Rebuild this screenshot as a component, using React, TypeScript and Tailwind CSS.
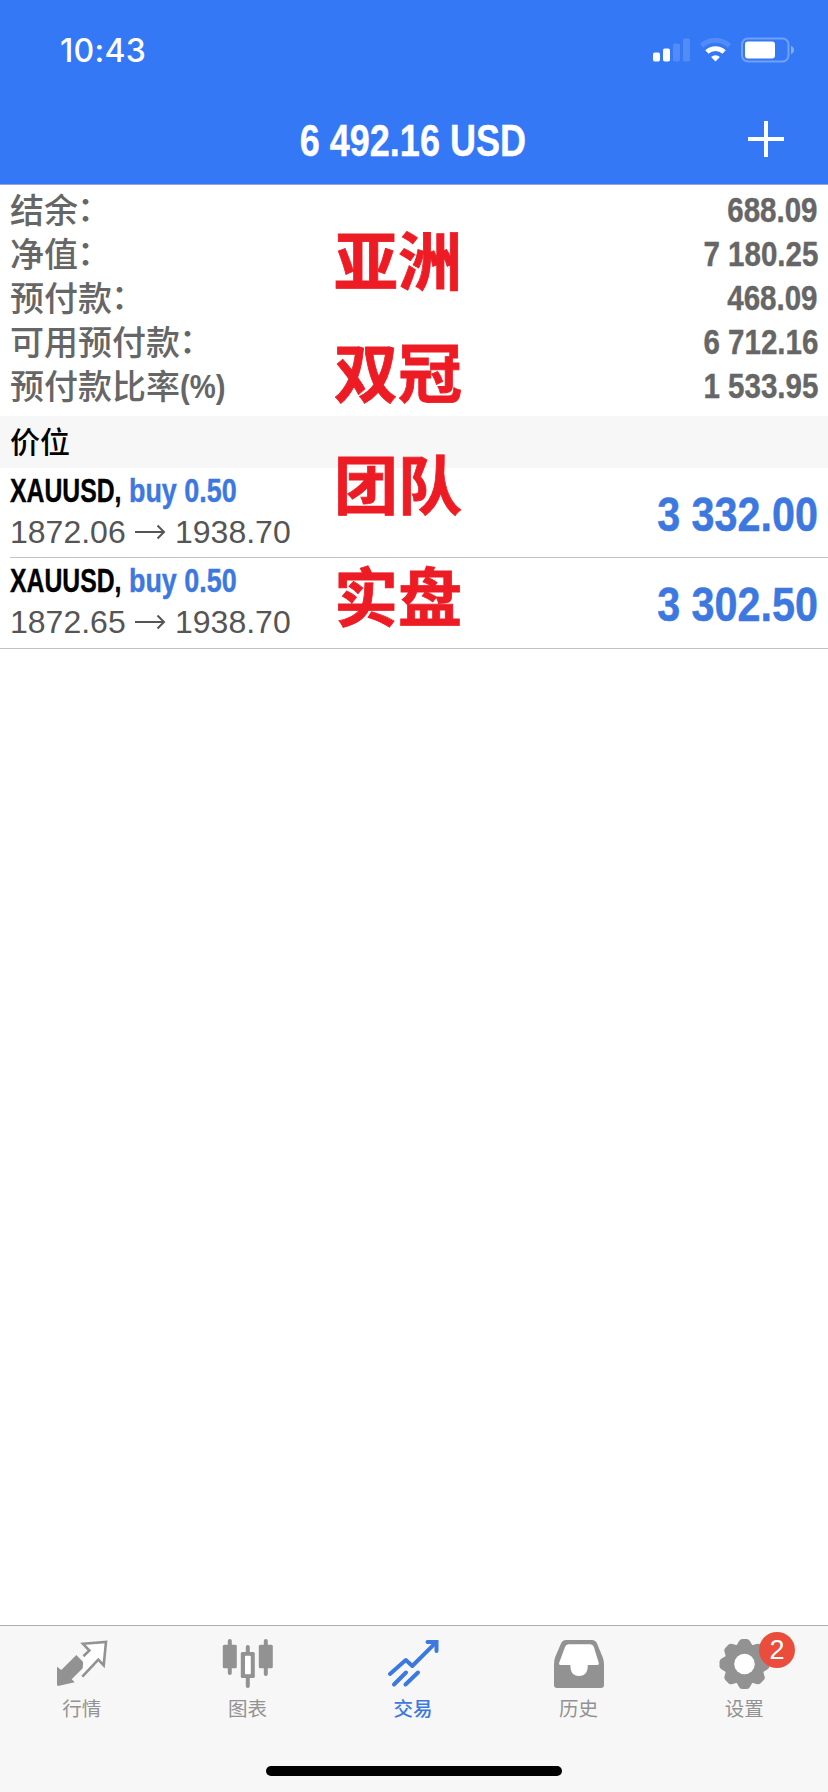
import type { ReactNode } from 'react';

interface AccountRow {
  label: string;
  suffix: string;
  value: string;
}

interface Position {
  symbol: string;
  side: string;
  open: string;
  current: string;
  profit: string;
}

const accountRows: AccountRow[] = [
  { label: '结余', suffix: '：', value: '688.09' },
  { label: '净值', suffix: '：', value: '7 180.25' },
  { label: '预付款', suffix: '：', value: '468.09' },
  { label: '可用预付款', suffix: '：', value: '6 712.16' },
  { label: '预付款比率', suffix: '(%)', value: '1 533.95' },
];

const positions: Position[] = [
  { symbol: 'XAUUSD,', side: 'buy 0.50', open: '1872.06', current: '1938.70', profit: '3 332.00' },
  { symbol: 'XAUUSD,', side: 'buy 0.50', open: '1872.65', current: '1938.70', profit: '3 302.50' },
];

const stamp = ['亚洲', '双冠', '团队', '实盘'];

function StatusBar() {
  return (
    <div className="flex h-[98px] items-center justify-between pl-[60px] pr-[34px]">
      <span className="pt-[3px] font-['Inter'] text-[32px] leading-none font-medium tracking-[0.3px]">10:43</span>
      <div className="flex items-center pt-px">
        <svg className="mr-[10px]" width="37" height="24" viewBox="0 0 37 24" fill="#fff">
          <rect x="0" y="14.5" width="7" height="9" rx="1.8" />
          <rect x="10" y="10.5" width="7" height="13" rx="1.8" />
          <rect x="20" y="5.5" width="7" height="18" rx="1.8" opacity="0.15" />
          <rect x="30" y="0.5" width="7" height="23" rx="1.8" opacity="0.15" />
        </svg>
        <svg className="mr-[10px]" width="31" height="24" viewBox="0 0 31 24" fill="none" stroke="#fff" strokeWidth="4.8">
          <path d="M1.6 7.8a20.4 20.4 0 0 1 27.8 0" opacity="0.15" />
          <path d="M6.9 14a12.7 12.7 0 0 1 17.2 0" />
          <path d="M15.5 23.6l-4.4-4.6a6.4 6.4 0 0 1 8.8 0z" fill="#fff" stroke="none" />
        </svg>
        <svg width="53" height="26" viewBox="0 0 53 26">
          <rect x="1" y="1.5" width="46.5" height="23" rx="6" fill="none" stroke="#fff" strokeOpacity="0.3" strokeWidth="2" />
          <rect x="4" y="4.5" width="30" height="17" rx="3" fill="#fff" />
          <path d="M50 8.8c4 1.8 4 6.6 0 8.4z" fill="#fff" opacity="0.4" />
        </svg>
      </div>
    </div>
  );
}

function TabItem({ label, active, children }: { label: string; active?: boolean; children: ReactNode }) {
  return (
    <div className={`flex flex-1 flex-col items-center pt-3 ${active ? 'text-[#3c78e0]' : 'text-[#929292]'}`}>
      <svg width="52" height="52" viewBox="0 0 52 52">
        {children}
      </svg>
      <span className={`mt-[9px] mr-[2px] text-[19.5px] leading-5 ${active ? 'font-medium' : ''}`}>{label}</span>
    </div>
  );
}

export default function App() {
  return (
    <div className="relative flex h-[1792px] w-[828px] flex-col overflow-hidden bg-white font-['Liberation_Sans','Noto_Sans_CJK_SC',sans-serif]">
      <header className="h-[185px] border-b border-[#8fa9dc] bg-[#3478f6] text-white">
        <StatusBar />
        <div className="grid h-[84px] grid-cols-[1fr_auto_1fr] items-center pr-[44px]">
          <h1 className="col-start-2 w-[270px] translate-x-[17px] translate-y-px scale-x-[0.81] text-center text-[44.5px] leading-none font-bold whitespace-nowrap [-webkit-text-stroke:0.4px]">
            6 492.16 USD
          </h1>
          <svg className="-mt-[2px] justify-self-end" width="36" height="36" viewBox="0 0 36 36" stroke="#fff" strokeWidth="4">
            <path d="M18 0v36M0 18h36" />
          </svg>
        </div>
      </header>

      <section className="h-[231px] px-[10px] pt-[3px] text-[#666]">
        {accountRows.map(row => (
          <div key={row.label} className="flex h-[44px] items-center justify-between">
            <span className="flex items-center pt-[2px] text-[34px] leading-none font-medium">
              {row.label}
              {row.suffix === '：' ? (
                <span className="-translate-x-px -translate-y-[2px]">{row.suffix}</span>
              ) : (
                <span className="origin-left -translate-y-px scale-x-[0.86] text-[34px] font-bold">{row.suffix}</span>
              )}
            </span>
            <span className="origin-right scale-x-[0.855] pt-px text-[34.5px] leading-none font-bold [-webkit-text-stroke:0.4px]">
              {row.value}
            </span>
          </div>
        ))}
      </section>

      <div className="flex h-[52px] items-center bg-[#f7f7f7] px-[10px] pt-px text-[30px] font-medium text-black">价位</div>

      {positions.map((p, i) => (
        <div key={p.open} className={i === 0 ? 'h-[90px] pl-[10px]' : 'h-[91px] border-b border-[#c3c3c3] pl-[10px]'}>
          <div className={`flex h-full items-center justify-between pr-[10px] ${i === 0 ? 'border-b border-[#c3c3c3]' : ''}`}>
            <div className="flex h-full flex-col pt-[6px]">
              <div className="flex text-[33px] leading-[34px] font-bold [-webkit-text-stroke:0.4px]">
                <span className="w-[119px] origin-left scale-x-[0.75] text-black">{p.symbol}</span>
                <span className="origin-left scale-x-[0.815] whitespace-nowrap text-[#3c78e0]">{p.side}</span>
              </div>
              <div className="mt-[7px] flex items-center text-[32px] leading-[34px] text-[#555]">
                <span className="w-[125px]">{p.open}</span>
                <svg className="mr-[9px]" width="31" height="16" viewBox="0 0 31 16" fill="none" stroke="currentColor" strokeWidth="2">
                  <path d="M0 8h29M22.5 1.5L29 8l-6.5 6.5" />
                </svg>
                <span>{p.current}</span>
              </div>
            </div>
            <span className="origin-right scale-x-[0.86] pt-[4px] text-[48px] leading-none font-bold text-[#3c78e0] [-webkit-text-stroke:0.5px]">
              {p.profit}
            </span>
          </div>
        </div>
      ))}

      {/* red caption laid over the list */}
      <div className="absolute top-[207px] left-[334px] text-[64px] leading-[112px] font-bold text-[#ed1c24] [-webkit-text-stroke:0.8px]">
        {stamp.map(t => (
          <div key={t}>{t}</div>
        ))}
      </div>

      <nav className="relative mt-auto h-[167px] border-t border-[#acacac] bg-[#f7f7f7]">
        <div className="flex">
          <TabItem label="行情">
            <path d="M0 28.7L4.3 32 19.3 17 29 27 14.7 41.3l3 3L1 48l-1-1z" fill="currentColor" />
            <path d="M25.3 38.7L41.3 21.6l5.4 5.7L49 3.9 26 5.8l6.4 6.7-6 5.7" fill="#fff" stroke="currentColor" strokeWidth="2.6" />
          </TabItem>
          <TabItem label="图表">
            <g fill="currentColor">
              <rect x="0.8" y="6.7" width="14" height="23.6" rx="1.5" />
              <rect x="5.8" y="1" width="4" height="36" rx="2" />
              <rect x="18.8" y="14" width="14" height="26" rx="1.5" />
              <rect x="23.8" y="7" width="4" height="43" rx="2" />
              <rect x="36.8" y="6.7" width="14" height="23.6" rx="1.5" />
              <rect x="41.8" y="1" width="4" height="37" rx="2" />
            </g>
            <rect x="23" y="17.7" width="5.8" height="18.5" rx="1" fill="#fff" />
          </TabItem>
          <TabItem label="交易" active>
            <g fill="none" stroke="currentColor" strokeWidth="4" strokeLinecap="round" strokeLinejoin="round">
              <path d="M2 36L17.8 22l6.5 6L48 4.3" />
              <path d="M39.5 4h9v9" strokeLinejoin="miter" />
              <path d="M6 46.5l12-12M17.5 46.5l12.5-12" />
            </g>
          </TabItem>
          <TabItem label="历史">
            <path d="M0 47V26q0-4 1.4-7.500L7 5.500Q8.500 2 12 2h26q3.500 0 5 3.500l5.400 13Q50 22 50 26v21q0 3-3 3H3q-3 0-3-3z" fill="currentColor" />
            <path d="M14.500 6.300h22q2.500 0 3.300 2.500L44.800 25q.6 2-1.500 2h-9.500c0 7-2.500 11-8.700 11s-8.700-4-8.700-11H6.500q-2 0-1.400-2l6-16.200q.9-2.500 3.400-2.500z" fill="#fff" />
          </TabItem>
          <TabItem label="设置">
            <g fill="currentColor">
              <circle cx="25.500" cy="26" r="20.500" />
              {[0, 45, 90, 135, 180, 225, 270, 315].map(deg => (
                <path key={deg} d="M16.800 9l3-5.500Q20.800 1 23.300 1h4.400q2.500 0 3.500 2.500l3 5.500z" transform={`rotate(${deg} 25.500 26)`} />
              ))}
            </g>
            <circle cx="25.500" cy="26" r="10.300" fill="#fff" />
          </TabItem>
        </div>
        <div className="absolute top-[6px] right-[33px] flex h-9 w-9 items-center justify-center rounded-full bg-[#eb4d3d] font-['Liberation_Sans'] text-[27px] leading-none text-white">
          2
        </div>
        <div className="absolute bottom-4 left-[266px] h-[10px] w-[296px] rounded-full bg-black" />
      </nav>
    </div>
  );
}
